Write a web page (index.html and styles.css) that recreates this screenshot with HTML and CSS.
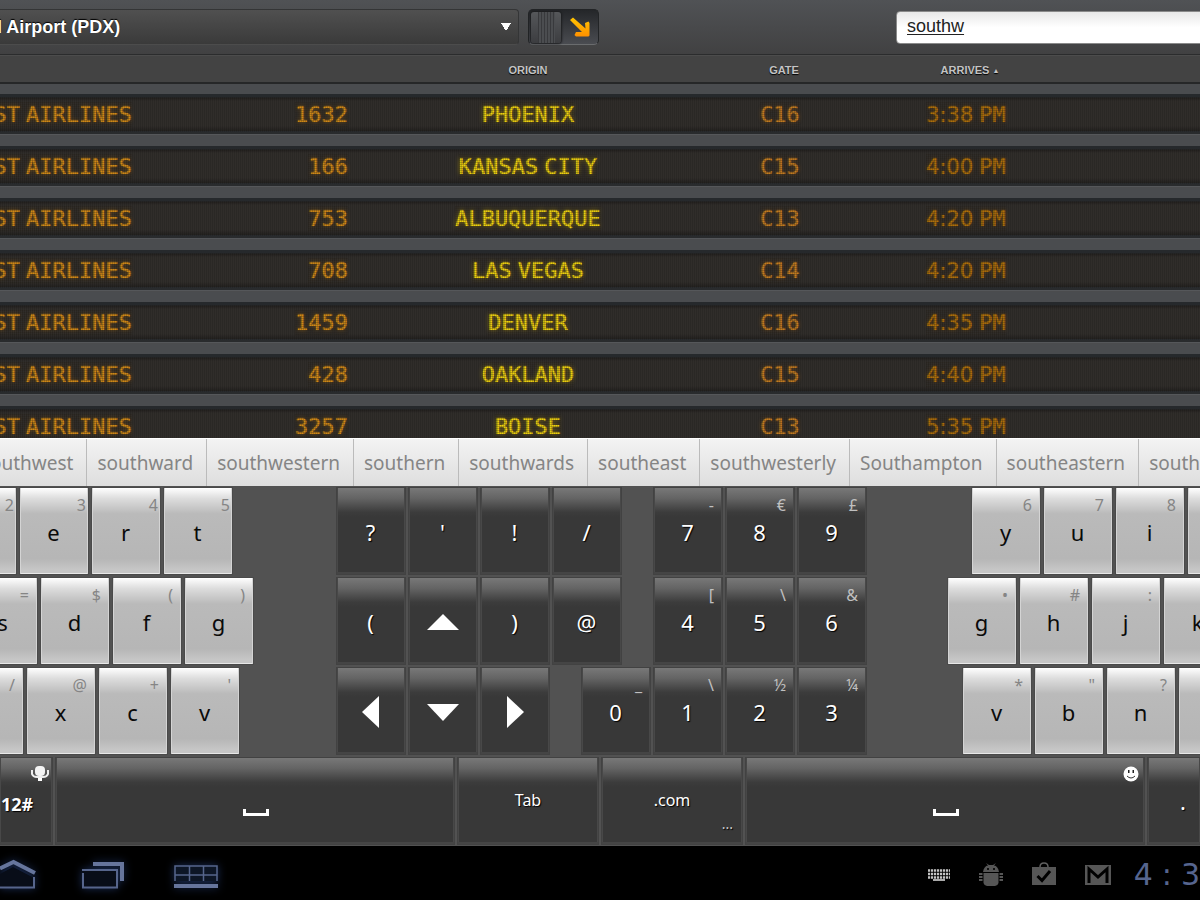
FILE: index.html
```html
<!DOCTYPE html>
<html lang="en">
<head>
<meta charset="utf-8">
<title>Arrivals</title>
<link rel="stylesheet" href="styles.css">
</head>
<body>
<header class="topbar">
  <select class="airport" aria-label="Airport"><option>l Airport (PDX)</option></select>
  <button class="toggle" type="button" aria-label="Show arrivals">
    <span class="knob"></span>
    <svg width="22" height="22" viewBox="0 0 22 22" aria-hidden="true"><defs><linearGradient id="amber" x1="0" y1="0" x2="0" y2="1"><stop offset="0" stop-color="#ffc400"/><stop offset="1" stop-color="#ff9000"/></linearGradient></defs><path d="M0 4 3 1.500 15.500 12.500 15 7 18.500 5.500 19.500 7V19.500L18.500 20.500H6L4.500 19 6 16 12 16Z" fill="url(#amber)"/></svg>
  </button>
  <input class="search" type="text" aria-label="Search flights" value="southw" spellcheck="false">
</header>

<main class="board">
  <table class="flights">
    <colgroup><col class="c-airline"><col class="c-flight"><col class="c-origin"><col class="c-gate"><col class="c-time"><col></colgroup>
    <thead><tr><th></th><th></th><th>ORIGIN</th><th class="gate-head">GATE</th><th class="time-head">ARRIVES <span class="sort">▲</span></th><th></th></tr></thead>
    <tbody>
      <tr><td class="airline"><span class="led"><span>ST</span> <span>AIRLINES</span></span></td><td class="flight"><span class="led">1632</span></td><td class="origin"><span class="led">PHOENIX</span></td><td class="gate"><span class="led">C16</span></td><td class="time"><span class="led"><span class="clock">3:38</span> <span>PM</span></span></td><td></td></tr>
      <tr><td class="airline"><span class="led"><span>ST</span> <span>AIRLINES</span></span></td><td class="flight"><span class="led">166</span></td><td class="origin"><span class="led"><span>KANSAS</span> <span>CITY</span></span></td><td class="gate"><span class="led">C15</span></td><td class="time"><span class="led"><span class="clock">4:00</span> <span>PM</span></span></td><td></td></tr>
      <tr><td class="airline"><span class="led"><span>ST</span> <span>AIRLINES</span></span></td><td class="flight"><span class="led">753</span></td><td class="origin"><span class="led">ALBUQUERQUE</span></td><td class="gate"><span class="led">C13</span></td><td class="time"><span class="led"><span class="clock">4:20</span> <span>PM</span></span></td><td></td></tr>
      <tr><td class="airline"><span class="led"><span>ST</span> <span>AIRLINES</span></span></td><td class="flight"><span class="led">708</span></td><td class="origin"><span class="led"><span>LAS</span> <span>VEGAS</span></span></td><td class="gate"><span class="led">C14</span></td><td class="time"><span class="led"><span class="clock">4:20</span> <span>PM</span></span></td><td></td></tr>
      <tr><td class="airline"><span class="led"><span>ST</span> <span>AIRLINES</span></span></td><td class="flight"><span class="led">1459</span></td><td class="origin"><span class="led">DENVER</span></td><td class="gate"><span class="led">C16</span></td><td class="time"><span class="led"><span class="clock">4:35</span> <span>PM</span></span></td><td></td></tr>
      <tr><td class="airline"><span class="led"><span>ST</span> <span>AIRLINES</span></span></td><td class="flight"><span class="led">428</span></td><td class="origin"><span class="led">OAKLAND</span></td><td class="gate"><span class="led">C15</span></td><td class="time"><span class="led"><span class="clock">4:40</span> <span>PM</span></span></td><td></td></tr>
      <tr><td class="airline"><span class="led"><span>ST</span> <span>AIRLINES</span></span></td><td class="flight"><span class="led">3257</span></td><td class="origin"><span class="led">BOISE</span></td><td class="gate"><span class="led">C13</span></td><td class="time"><span class="led"><span class="clock">5:35</span> <span>PM</span></span></td><td></td></tr>
    </tbody>
  </table>
</main>

<div class="suggestions">
  <button type="button" class="first">outhwest</button><button type="button">southward</button><button type="button">southwestern</button><button type="button">southern</button><button type="button">southwards</button><button type="button">southeast</button><button type="button">southwesterly</button><button type="button">Southampton</button><button type="button">southeastern</button><button type="button">south</button>
</div>

<section class="keyboard" aria-label="Keyboard">
  <div class="row row-a">
    <div class="group left"><button class="key light"><small>2</small></button><button class="key light">e<small>3</small></button><button class="key light">r<small>4</small></button><button class="key light">t<small>5</small></button></div>
    <div class="group"><button class="key">?</button><button class="key">'</button><button class="key">!</button><button class="key">/</button></div>
    <div class="group nums"><button class="key">7<small>-</small></button><button class="key">8<small>€</small></button><button class="key">9<small>£</small></button></div>
    <div class="group right"><button class="key light">y<small>6</small></button><button class="key light">u<small>7</small></button><button class="key light">i<small>8</small></button><button class="key light" aria-label="More"></button></div>
  </div>
  <div class="row row-b">
    <div class="group left"><button class="key light">s<small>=</small></button><button class="key light">d<small>$</small></button><button class="key light">f<small>(</small></button><button class="key light">g<small>)</small></button></div>
    <div class="group"><button class="key">(</button><button class="key" aria-label="Up"><svg width="32" height="32" viewBox="0 0 32 32"><path d="M0 24 16 8 32 24Z" fill="#fff"/></svg></button><button class="key">)</button><button class="key">@</button></div>
    <div class="group nums"><button class="key">4<small>[</small></button><button class="key">5<small>\</small></button><button class="key">6<small>&amp;</small></button></div>
    <div class="group right"><button class="key light">g<small>•</small></button><button class="key light">h<small>#</small></button><button class="key light">j<small>:</small></button><button class="key light">k</button></div>
  </div>
  <div class="row row-c">
    <div class="group left"><button class="key light"><small>/</small></button><button class="key light">x<small>@</small></button><button class="key light">c<small>+</small></button><button class="key light">v<small>'</small></button></div>
    <div class="group"><button class="key" aria-label="Left"><svg width="32" height="32" viewBox="0 0 32 32"><path d="M24 0V32L7 16Z" fill="#fff"/></svg></button><button class="key" aria-label="Down"><svg width="32" height="32" viewBox="0 0 32 32"><path d="M0 8H32L16 25Z" fill="#fff"/></svg></button><button class="key" aria-label="Right"><svg width="32" height="32" viewBox="0 0 32 32"><path d="M8 0V32L25 16Z" fill="#fff"/></svg></button></div>
    <div class="group nums"><button class="key">0<small>_</small></button><button class="key">1<small>\</small></button><button class="key">2<small>½</small></button><button class="key">3<small>¼</small></button></div>
    <div class="group right"><button class="key light">v<small>*</small></button><button class="key light">b<small>"</small></button><button class="key light">n<small>?</small></button><button class="key light" aria-label="More"></button></div>
  </div>
  <div class="bottom-row">
    <button class="key symbols">12#<svg class="corner mic" width="18" height="16" viewBox="0 0 18 16"><rect x="4" y="0" width="10" height="10" rx="4" fill="#f4f4f4"/><path d="M1 4V8Q2 11 6 11H12Q16 11 17 8V4M9 11V15" fill="none" stroke="#eee" stroke-width="2"/><path d="M7 12H11V15H7Z" fill="#fff"/></svg></button>
    <button class="key space" aria-label="Space"><svg width="26" height="8" viewBox="0 0 26 8"><path d="M1.500 0V5.500H24.500V0" fill="none" stroke="#fff" stroke-width="3"/></svg></button>
    <button class="key word">Tab</button>
    <button class="key word">.com<span class="more">...</span></button>
    <button class="key space" aria-label="Space"><svg width="26" height="8" viewBox="0 0 26 8"><path d="M1.500 0V5.500H24.500V0" fill="none" stroke="#fff" stroke-width="3"/></svg><svg class="corner smile" width="16" height="16" viewBox="0 0 16 16"><circle cx="8" cy="8" r="7.500" fill="#fff"/><path d="M5 4H6.500V7H5ZM9.500 4H11V7H9.500Z" fill="#222"/><path d="M4 10Q8 14 12 10" fill="none" stroke="#333"/></svg></button>
    <button class="key period">.</button>
  </div>
</section>

<nav class="navbar">
  <div class="nav-left">
    <button aria-label="Home"><svg width="36" height="32" viewBox="0 0 36 32" fill="none"><path d="M0 15 13 8 34 19V28.500H0Z" fill="#080d18"/><path d="M0 9.500 13.500 3 35 14" stroke="#66759c" stroke-width="4"/><path d="M34 18V28.500H0" stroke="#56658c" stroke-width="2"/></svg></button>
    <button aria-label="Recent apps"><svg width="42" height="32" viewBox="0 0 42 32" fill="none"><path d="M11 5H40V22" stroke="#66759c" stroke-width="4"/><path d="M0 11H35V28.500H1V14" stroke="#56658c" stroke-width="2" fill="#080d18"/></svg></button>
    <button aria-label="Hide keyboard"><svg width="44" height="32" viewBox="0 0 44 32" fill="none"><path d="M1 22V7H43V22M1 16H43M15.500 7V22M29.500 7V22" stroke="#56658c" stroke-width="1.500" fill="#0d1626"/><path d="M0 27H44" stroke="#66759c" stroke-width="4"/></svg></button>
  </div>
  <div class="nav-right">
    <svg class="i-kbd" width="22" height="12" viewBox="0 0 22 12"><path d="M0 1.500H22M0 5H22M0 8.500H22" stroke="#c4c4c4" stroke-width="2.500" stroke-dasharray="2.200 .8"/><path d="M5 11H17" stroke="#aaa" stroke-width="2"/></svg>
    <svg class="i-droid" width="24" height="24" viewBox="0 0 24 24" fill="#565656"><path d="M4 9Q5 3 9 2.500L7 0 10 2H14L17 0 15 2.500Q19 3 20 9Z"/><path d="M4.500 10H19.500V20Q19 22.500 16 23H8Q5 22.500 4.500 20ZM0 10H3.500V12H0ZM0 13H3.500V15H0ZM0 16H3.500V18H0ZM20.500 10H24V12H20.500ZM20.500 13H24V15H20.500ZM20.500 16H24V18H20.500Z"/><path d="M8 5H10V7H8ZM14 5H16V7H14Z" fill="#111"/></svg>
    <svg class="i-bag" width="24" height="28" viewBox="0 -1 24 28"><path d="M8 5Q8 1 12 1T16 5" fill="none" stroke="#606060" stroke-width="1.500"/><path d="M0 5H24V23H0Z" fill="#565656"/><path d="M5.500 14 10 18.500 18 9" fill="none" stroke="#000" stroke-width="3"/></svg>
    <svg class="i-mail" width="26" height="20" viewBox="0 0 26 20"><path d="M0 0H26V20H0Z" fill="#565656"/><path d="M4 18V4L13 12 22 4V18" fill="none" stroke="#000" stroke-width="3"/></svg>
    <div class="time-now"><span>4</span><span>:</span><span>3</span></div>
  </div>
</nav>
</body>
</html>
```
FILE: styles.css
```css
* { box-sizing: border-box; }
body {
  margin: 0;
  height: 100vh;
  display: flex;
  flex-direction: column;
  overflow: hidden;
  background: #000;
  font-family: "Liberation Sans", Arial, sans-serif;
}
button { font: inherit; cursor: pointer; }

/* Top bar */
.topbar {
  flex: none;
  display: flex;
  align-items: center;
  gap: 9px;
  height: 54px;
  background: linear-gradient(#505255, #414142);
}
.airport {
  width: 44%;
  height: 36px;
  margin-left: -9px;
  padding: 0 0 0 5px;
  appearance: none;
  border: 1px solid #343536;
  border-bottom-color: #4c4c4c;
  border-radius: 4px;
  color: #fff;
  font: bold 18px "Liberation Sans", Arial, sans-serif;
  text-shadow: 0 -1px 1px #000;
  background:
    linear-gradient(to bottom right, #fff 50%, transparent 51%) right 7px center / 5px 8px no-repeat,
    linear-gradient(to bottom left, #fff 50%, transparent 51%) right 12px center / 5px 8px no-repeat,
    linear-gradient(#505050, #3a3a3a);
}
.toggle {
  display: flex;
  align-items: center;
  gap: 9px;
  width: 71px;
  height: 36px;
  padding: 0 2px;
  border: 1px solid #222426;
  border-bottom-color: #6a6c6e;
  border-radius: 5px;
  background: linear-gradient(#242629, #4a4c51);
}
.knob {
  width: 30px;
  height: 31px;
  border-radius: 3px;
  background:
    repeating-linear-gradient(90deg, #38393c 0 1px, #4b4d50 1px 3px) center / 17px 100% no-repeat,
    linear-gradient(#55575a, #3c3d40);
  box-shadow: 0 0 2px 1px #1c1d1f;
}
.search {
  width: 26%;
  height: 33px;
  margin: 0 -8px 0 auto;
  padding: 0 11px 1px 10px;
  border: 1px solid #8a8a8a;
  border-radius: 4px;
  color: #222;
  font: 18px "Liberation Sans", Arial, sans-serif;
  text-decoration: underline;
  text-underline-offset: 2px;
  background: linear-gradient(#e8e8e8, #fff 50%);
}

/* Arrivals board */
.board { flex: 1; min-height: 0; overflow: hidden; background: #4a4c4e; }
.flights { width: 100%; table-layout: fixed; border-collapse: collapse; }
.c-airline { width: 11%; }
.c-flight { width: 18%; }
.c-origin { width: 30%; }
.c-gate { width: 12%; }
.c-time { width: 19%; }
th, td { padding: 0; }
thead tr {
  height: 30px;
  background: linear-gradient(#2b2c2d 0 1px, #4c4c4c 1px 2px, #434343 2px 28px, #262728 28px 30px);
}
th { color: #c4c4c4; font-size: 11px; line-height: 14px; text-shadow: 0 1px 1px #000; padding-top: 2px; }
.gate-head, .time-head { padding-left: 8px; }
.sort { font-size: 7px; vertical-align: 1px; }
tbody tr {
  height: 52px;
  background:
    repeating-linear-gradient(90deg, rgba(0,0,0,.12) 0 1px, transparent 1px 2px) 0 13px / 100% 35px no-repeat,
    linear-gradient(#4a4c4f 0 10px, #26292c 10px 13px, #24211f 14px, #302d2a 17px 42px, #23211f 47px, #292b2d 47px 50px, #55575a 50px 51px, #4b4c4e 51px);
}
td { padding-top: 9px; white-space: nowrap; text-align: center; }
.led {
  position: relative;
  display: inline-flex;
  gap: 6px;
  font: 22px/26px "DejaVu Sans Mono", monospace;
}
/* Dark mesh that splits the glyphs into lamp dots */
.led::after {
  content: "";
  position: absolute;
  inset: 0;
  background:
    repeating-linear-gradient(90deg, rgba(38,32,24,.2) 0 1px, transparent 1px 2px),
    repeating-linear-gradient(rgba(38,32,24,.25) 0 1px, transparent 1px 2px);
}
.clock { font: 21px/26px "DejaVu Sans", sans-serif; }
.airline, .flight { color: #cf8817; text-shadow: 0 0 1px #b87810, 0 0 4px rgba(210,130,10,.5); text-align: right; }
.airline .led { float: right; }
.origin { color: #ecd00f; text-shadow: 0 0 1px #d0b008, 0 0 5px rgba(230,190,0,.6); }
.gate { color: #c27b20; text-shadow: 0 0 1px #a8681a, 0 0 4px rgba(190,110,20,.5); }
.time { color: #ae6f0a; text-shadow: 0 0 1px #965c06, 0 0 4px rgba(170,100,0,.5); }

/* Word suggestions */
.suggestions {
  flex: none;
  display: flex;
  height: 48px;
  overflow: hidden;
  border-top: 1px solid #fff;
  background: linear-gradient(#f3f3f3, #dedede);
}
.suggestions button {
  flex: none;
  padding: 0 13px 0 10px;
  border: 0;
  border-left: 1px solid #bbb;
  background: none;
  color: #858585;
  font: 19px/46px "Noto Sans", sans-serif;
}
.suggestions .first { margin-left: -21px; }

/* Keyboard */
.keyboard {
  flex: none;
  display: grid;
  gap: 2px;
  padding-top: 1px;
  overflow: hidden;
  background: #525252;
  font-family: "Noto Sans", sans-serif;
}
.row {
  display: grid;
  grid-template-columns: minmax(0, 112fr) minmax(0, 96fr) minmax(0, 81fr) minmax(0, 111fr);
}
.group { display: flex; gap: 2px; }
.left, .nums { justify-content: flex-end; }
.row-a .left { padding-right: 103px; }
.row-b .left { padding-right: 82px; }
.row-c .left { padding-right: 96px; }
.row-a .right { padding-left: 104px; }
.row-b .right { padding-left: 80px; }
.row-c .right { padding-left: 95px; }
.key {
  position: relative;
  flex: none;
  display: flex;
  align-items: center;
  justify-content: center;
  width: 70px;
  height: 88px;
  padding: 1px 1px 0 0;
  border: 1px solid #424242;
  color: #fff;
  font-size: 22px;
  line-height: 28px;
  text-shadow: 1px 1px 1px #000;
  background: linear-gradient(#787878, #646464 12%, #3c3c3c 28%, #383838 34%);
  box-shadow: inset 0 -2px 0 #454545, inset 1px 0 #484848, inset -1px 0 #484848;
}
.light {
  border-color: #4a4a4a;
  color: #0a0a0a;
  text-shadow: none;
  background: linear-gradient(#fff, #ddd 12%, #bababa 30%, #b6b6b6 82%, #c6c6c6 95%);
  box-shadow: inset 1px 0 #d4d4d4, inset -1px 0 #d4d4d4, inset 0 -1px #e8e8e8, inset 0 1px #fff;
}
.key small {
  position: absolute;
  top: 6px;
  right: 8px;
  color: #c0c0c0;
  font-size: 16px;
  line-height: 22px;
  text-shadow: none;
}
.light small { color: #858585; }
.row-a .left small { right: 2px; }
.bottom-row {
  display: grid;
  grid-template-columns: minmax(0, 53fr) minmax(0, 400fr) minmax(0, 142fr) minmax(0, 142fr) minmax(0, 400fr) minmax(0, 53fr);
  gap: 2px;
  padding-bottom: 1px;
}
.bottom-row .key { width: auto; }
.bottom-row .symbols { justify-content: flex-start; padding: 6px 0 0 1px; border-left: 0; font-size: 18px; font-weight: bold; }
.bottom-row .word { padding: 0 0 3px; font-size: 16px; }
.bottom-row .space { padding: 24px 0 0 2px; }
.bottom-row .period { padding: 0 0 0 18px; border-right: 0; }
.corner { position: absolute; top: 8px; }
.mic { right: 3px; }
.smile { right: 5px; }
.more { position: absolute; right: 9px; bottom: 10px; font-size: 14px; line-height: 20px; color: #ccc; }

/* System bar */
.navbar {
  flex: none;
  display: flex;
  justify-content: space-between;
  align-items: center;
  height: 54px;
  padding-top: 4px;
  overflow: hidden;
  background: #000;
}
.nav-left, .nav-right { display: flex; align-items: center; }
.nav-left { gap: 46px; }
.nav-left button { display: flex; padding: 0; border: 0; background: none; }
.nav-left svg { filter: drop-shadow(0 0 4px #1a2c54); }
.nav-left button + button + button { margin-left: 4px; }
.nav-right { gap: 29px; }
.time-now {
  display: flex;
  gap: 9px;
  margin: 0 0 0 -6px;
  color: #56658f;
  font: 30px/36px "DejaVu Sans", sans-serif;
}
```
